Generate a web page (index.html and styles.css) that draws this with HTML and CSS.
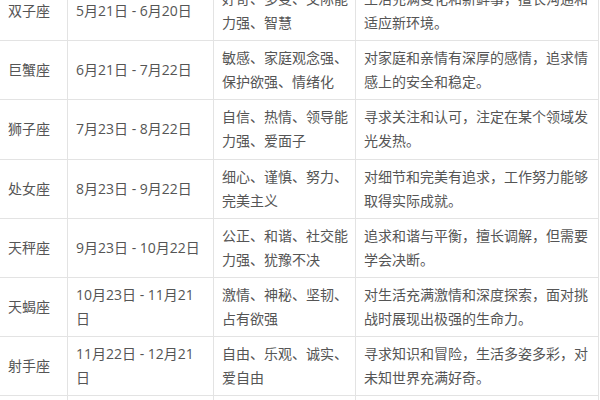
FILE: index.html
```html
<!DOCTYPE html>
<html lang="zh-CN">
<head>
<meta charset="utf-8">
<title>星座性格表</title>
<link rel="stylesheet" href="styles.css">
</head>
<body>
<table class="zodiac">
  <colgroup>
    <col class="c-name">
    <col class="c-date">
    <col class="c-trait">
    <col class="c-desc">
  </colgroup>
  <tbody>
    <tr>
      <td>双子座</td>
      <td>5月21日 - 6月20日</td>
      <td>好奇、多变、交际能力强、智慧</td>
      <td>生活充满变化和新鲜事，擅长沟通和适应新环境。</td>
    </tr>
    <tr>
      <td>巨蟹座</td>
      <td>6月21日 - 7月22日</td>
      <td>敏感、家庭观念强、保护欲强、情绪化</td>
      <td>对家庭和亲情有深厚的感情，追求情感上的安全和稳定。</td>
    </tr>
    <tr>
      <td>狮子座</td>
      <td>7月23日 - 8月22日</td>
      <td>自信、热情、领导能力强、爱面子</td>
      <td>寻求关注和认可，注定在某个领域发光发热。</td>
    </tr>
    <tr>
      <td>处女座</td>
      <td>8月23日 - 9月22日</td>
      <td>细心、谨慎、努力、完美主义</td>
      <td>对细节和完美有追求，工作努力能够取得实际成就。</td>
    </tr>
    <tr>
      <td>天秤座</td>
      <td>9月23日 - 10月22日</td>
      <td>公正、和谐、社交能力强、犹豫不决</td>
      <td>追求和谐与平衡，擅长调解，但需要学会决断。</td>
    </tr>
    <tr>
      <td>天蝎座</td>
      <td>10月23日 - 11月21日</td>
      <td>激情、神秘、坚韧、占有欲强</td>
      <td>对生活充满激情和深度探索，面对挑战时展现出极强的生命力。</td>
    </tr>
    <tr>
      <td>射手座</td>
      <td>11月22日 - 12月21日</td>
      <td>自由、乐观、诚实、爱自由</td>
      <td>寻求知识和冒险，生活多姿多彩，对未知世界充满好奇。</td>
    </tr>
    <tr>
      <td>摩羯座</td>
      <td>12月22日 - 1月19日</td>
      <td>务实、稳重、有责任心、有耐心</td>
      <td>脚踏实地，追求成功和地位，善于规划未来。</td>
    </tr>
  </tbody>
</table>
</body>
</html>
```

FILE: styles.css
```css
html, body {
  margin: 0;
  padding: 0;
  background: #ffffff;
  overflow: hidden;
}

.zodiac {
  border-collapse: collapse;
  table-layout: fixed;
  width: 599px;
  margin-top: -19px;
  margin-left: -1px;
  font-family: "Open Sans", "Noto Sans CJK SC", "Noto Sans", sans-serif;
  font-size: 14px;
  line-height: 24px;
  color: #555555;
}

.c-name { width: 68px; }
.c-date { width: 146px; }
.c-trait { width: 142px; }
.c-desc { width: 243px; }

.zodiac td {
  border: 1px solid #e3e3e3;
  padding: 5px 7px 5px 8px;
  vertical-align: middle;
  text-align: left;
  word-break: normal;
  line-break: strict;
}

.zodiac tr {
  height: 59.2px;
}
```
